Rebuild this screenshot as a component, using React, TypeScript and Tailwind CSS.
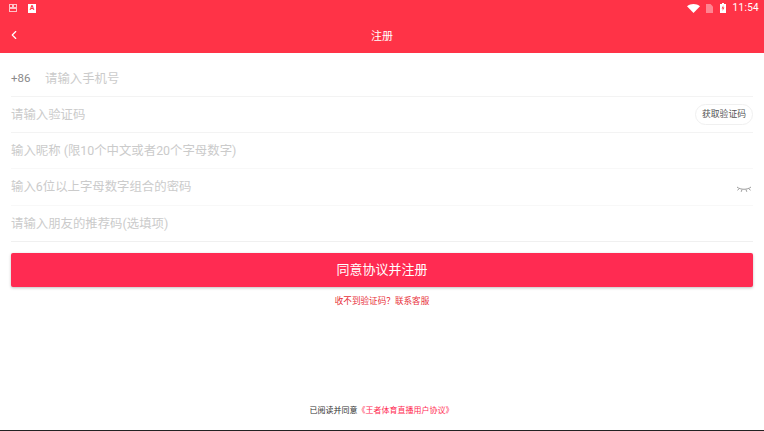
import { ChevronLeft } from "lucide-react";

const cjk = "font-['Roboto','Noto_Sans_CJK_SC',sans-serif]";

const App = () => {
  return (
    <div className={`flex flex-col w-[764px] h-[431px] bg-white overflow-hidden ${cjk}`}>
      {/* status bar */}
      <div className="flex items-center justify-between h-4 pl-[9px] pr-[5px] bg-[#ff3347] text-white">
        <div className="flex items-center gap-[11px]">
          <svg width="8" height="8" viewBox="0 0 8 8" fill="none" stroke="white" strokeWidth="1" opacity="0.7">
            <rect x="0.5" y="0.5" width="3" height="3" />
            <rect x="4.5" y="0.5" width="3" height="3" />
            <rect x="0.5" y="4.5" width="7" height="3" />
          </svg>
          <div className="flex items-center justify-center w-2 h-[9px] bg-white text-[#ff3347] text-[7px] font-bold leading-none">A</div>
        </div>
        <div className="flex items-center">
          <svg width="13" height="9" viewBox="0 0 13 9" fill="white">
            <path d="M0 2.2C3.6-.7 9.4-.7 13 2.2L6.5 9z" />
          </svg>
          <svg className="ml-[6px]" width="7" height="9" viewBox="0 0 7 9" fill="white" opacity="0.4">
            <path d="M0 0h4.5L7 2.5V9H0z" />
          </svg>
          <svg className="ml-[7px]" width="6" height="10" viewBox="0 0 6 10" fill="white">
            <path d="M2 0h2v1h2v9H0V1h2z" />
            <path d="M3.4 2.2 1.6 5.6h1.2l-.3 2.4 1.9-3.5H3.2z" fill="#ff3347" />
          </svg>
          <span className="ml-[7px] text-[10px] leading-none tracking-[0.3px] font-['Roboto',sans-serif]">11:54</span>
        </div>
      </div>

      {/* title bar */}
      <div className="relative flex items-center justify-center h-[37px] pt-[3px] bg-[#ff3347] text-white">
        <ChevronLeft className="absolute left-[7px] top-[12px] w-[14px] h-[14px]" strokeWidth={2} />
        <span className="text-[11px] leading-none">注册</span>
      </div>

      {/* form */}
      <div className="flex flex-col px-[11px] text-[12.4px] text-[#cbcbcb]">
        <div className="flex items-center h-11 pt-[9px] border-b border-[#f3f3f3]">
          <span className="w-[34px] text-[11.5px] text-[#8a8a8a]">+86</span>
          <span>请输入手机号</span>
        </div>
        <div className="flex items-center justify-between h-9 border-b border-[#f3f3f3]">
          <span className="pt-[2px]">请输入验证码</span>
          <span className="flex items-center h-[21px] px-[6px] rounded-full border border-[#f0f0f0] text-[8.8px] text-[#555555]">获取验证码</span>
        </div>
        <div className="flex items-center h-9 pt-[2px] border-b border-[#f8f8f8]">
          <span>输入昵称 (限10个中文或者20个字母数字)</span>
        </div>
        <div className="flex items-center justify-between h-[37px] border-b border-[#f8f8f8]">
          <span>输入6位以上字母数字组合的密码</span>
          <svg className="mr-[1px] mt-1" width="16" height="9" viewBox="0 0 16 9" fill="none" stroke="#9c9c9c" strokeWidth="1">
            <path d="M1 2c3.5 3 10.5 3 14 0" />
            <path d="M3 3.6 1.6 5.4M6 4.6l-.8 2.2M10 4.6l.8 2.2M13 3.6l1.4 1.8" />
          </svg>
        </div>
        <div className="flex items-center h-9 pt-[2px] border-b border-[#f0f0f0]">
          <span>请输入朋友的推荐码(选填项)</span>
        </div>
      </div>

      {/* submit */}
      <div className="flex flex-col items-center px-[11px] mt-[11px]">
        <button type="button" className="w-full h-[34px] rounded-[2px] bg-[#ff2b52] text-white text-[13px] shadow-[0_1px_3px_rgba(0,0,0,0.25)]">
          同意协议并注册
        </button>
        <span className="mt-[9px] text-[8.6px] leading-[10px] text-[#e8303a]">收不到验证码？联系客服</span>
      </div>

      {/* agreement */}
      <div className="flex justify-center mt-auto pb-[14px] pr-[1px] text-[8px] leading-[10px] text-[#333333]">
        <span>已阅读并同意</span>
        <span className="text-[#ff2b52]">《王者体育直播用户协议》</span>
      </div>
      <div className="h-px bg-[#222222]" />
    </div>
  );
};

export default App;
